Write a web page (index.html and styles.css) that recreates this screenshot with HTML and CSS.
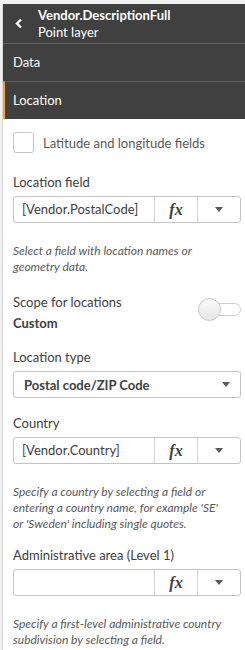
FILE: index.html
```html
<!DOCTYPE html>
<html lang="en">
<head>
<meta charset="UTF-8" />
<meta name="viewport" content="width=device-width, initial-scale=1" />
<title>Point layer properties</title>
<link rel="stylesheet" href="styles.css">
</head>
<body>

<div class="panel">

  <header class="layer-head">
    <button class="back-btn" aria-label="Back">
      <svg width="8" height="11" viewBox="0 0 8 11"><polyline points="6,1.5 2,5.5 6,9.5" fill="none" stroke="#fff" stroke-width="2.4"/></svg>
    </button>
    <div class="layer-title">
      <div class="name">Vendor.DescriptionFull</div>
      <div class="kind">Point layer</div>
    </div>
  </header>

  <div class="nav-item">Data</div>
  <div class="nav-item active">Location</div>

  <div class="content">

    <label class="check-row">
      <span class="checkbox"></span>
      Latitude and longitude fields
    </label>

    <div class="field first">
      <div class="label">Location field</div>
      <div class="combo">
        <div class="combo-value">[Vendor.PostalCode]</div>
        <div class="combo-btn fx">fx</div>
        <div class="combo-btn"><span class="caret"></span></div>
      </div>
      <p class="help">Select a field with location names or<br>geometry data.</p>
    </div>

    <div class="scope">
      <div>
        <div class="label">Scope for locations</div>
        <div class="label strong">Custom</div>
      </div>
      <div class="toggle"><span class="knob"></span></div>
    </div>

    <div class="field">
      <div class="label">Location type</div>
      <div class="select">
        <span>Postal code/ZIP Code</span>
        <span class="caret"></span>
      </div>
    </div>

    <div class="field">
      <div class="label">Country</div>
      <div class="combo">
        <div class="combo-value">[Vendor.Country]</div>
        <div class="combo-btn fx">fx</div>
        <div class="combo-btn"><span class="caret"></span></div>
      </div>
      <p class="help">Specify a country by selecting a field or<br>entering a country name, for example 'SE'<br>or 'Sweden' including single quotes.</p>
    </div>

    <div class="field">
      <div class="label">Administrative area (Level 1)</div>
      <div class="combo">
        <div class="combo-value"></div>
        <div class="combo-btn fx">fx</div>
        <div class="combo-btn"><span class="caret"></span></div>
      </div>
      <p class="help">Specify a first-level administrative country<br>subdivision by selecting a field.</p>
    </div>

  </div>
</div>

</body>
</html>
```

FILE: styles.css
```css
body {
  margin: 0;
  background: #f0f0f0;
  font-family: Lato, "Open Sans", sans-serif;
  font-size: 13px;
  color: #404040;
}
.panel {
  margin: 4px 0 0 2px;
  border-left: 1px solid #d6d6d6;
  background: #fff;
  min-height: 646px;
}
/* Cabecalho */
.layer-head {
  display: flex;
  align-items: center;
  height: 39px;
  background: #404040;
  color: #fff;
}
.back-btn {
  width: 35px;
  height: 39px;
  padding: 0 0 0 12px;
  background: none;
  border: none;
  display: flex;
  align-items: center;
}
.layer-title .name {
  font-weight: bold;
  font-size: 13px;
  line-height: 16px;
}
.layer-title .kind {
  line-height: 18px;
}
.nav-item {
  background: #404040;
  color: #fff;
  height: 37px;
  line-height: 37px;
  border-top: 1px solid #5e5e5e;
  padding-left: 10px;
}
.nav-item.active {
  border-left: 2px solid #f8a31b;
  padding-left: 8px;
}
/* Conteudo */
.content {
  padding: 13px 4px 0 10px;
}
.check-row {
  display: flex;
  align-items: center;
  gap: 9px;
  color: #595959;
  height: 21px;
}
.checkbox {
  width: 19px;
  height: 19px;
  border: 1px solid #c4c4c4;
  border-radius: 3px;
}
.field {
  margin-top: 17px;
}
.field.first {
  margin-top: 21px;
}
.help + .field, .field + .field:last-child {
  margin-top: 15px;
}
.label {
  line-height: 16px;
  margin-bottom: 6px;
}
.label.strong {
  font-weight: bold;
  margin: 5px 0 0;
}
.combo, .select {
  display: flex;
  height: 25px;
  border: 1px solid #c4c4c4;
  border-radius: 3px;
}
.combo-value {
  flex: 1;
  padding-left: 8px;
  line-height: 25px;
}
.combo-btn {
  width: 42px;
  border-left: 1px solid #d4d4d4;
  display: flex;
  align-items: center;
  justify-content: center;
}
.fx {
  font-family: "Liberation Serif", serif;
  font-style: italic;
  font-weight: bold;
  font-size: 16px;
  color: #404040;
}
.caret {
  width: 0;
  height: 0;
  border-left: 4px solid transparent;
  border-right: 4px solid transparent;
  border-top: 5px solid #595959;
}
.select {
  align-items: center;
  justify-content: space-between;
  padding: 0 10px;
  font-weight: bold;
}
.help {
  margin: 20px 0 0;
  font-size: 12px;
  font-style: italic;
  line-height: 16px;
  color: #595959;
}
.scope {
  display: flex;
  justify-content: space-between;
  align-items: flex-start;
  margin-top: 19px;
}
.scope + .field {
  margin-top: 18px;
}
.scope .label {
  margin-bottom: 0;
}
.toggle {
  position: relative;
  width: 43px;
  height: 22px;
  margin-top: 4px;
}
.toggle::before {
  content: "";
  position: absolute;
  left: 12px;
  right: 0;
  top: 5px;
  height: 11px;
  border: 1px solid #cfcfcf;
  border-left: none;
  border-radius: 0 7px 7px 0;
  background: #fff;
}
.knob {
  position: absolute;
  left: 0;
  top: 0;
  width: 21px;
  height: 21px;
  border-radius: 50%;
  border: 1px solid #c8c8c8;
  background: linear-gradient(#fafafa, #e6e6e6);
}
```
